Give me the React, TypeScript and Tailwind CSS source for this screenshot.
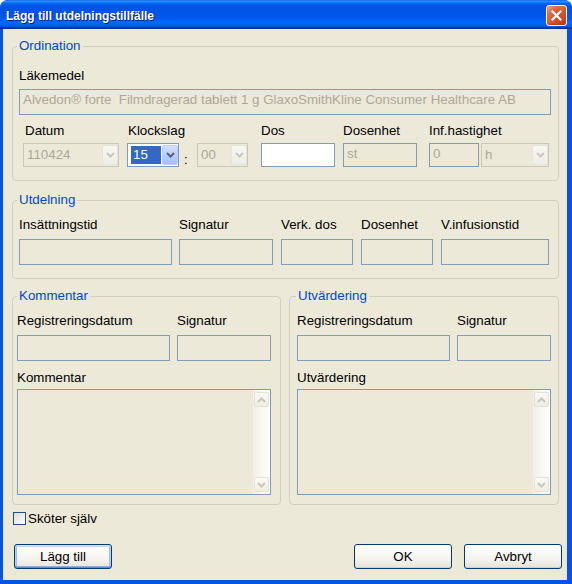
import React from "react";

function Chevron({ color, up }: { color: string; up?: boolean }) {
  return (
    <svg width="9" height="6" viewBox="0 0 9 6">
      <polyline
        points={up ? "1,5 4.5,1.5 8,5" : "1,1 4.5,4.5 8,1"}
        fill="none"
        stroke={color}
        strokeWidth="2"
      />
    </svg>
  );
}

function Label({ children, className = "" }: { children: React.ReactNode; className?: string }) {
  return <div className={`h-[16px] leading-[16px] whitespace-nowrap ${className}`}>{children}</div>;
}

function Box({ className = "", text, white }: { className?: string; text?: string; white?: boolean }) {
  return (
    <div
      className={`h-[26px] border border-[#7F9DB9] pl-[3px] pt-[2px] leading-[16px] text-[#ACA899] whitespace-pre overflow-hidden ${
        white ? "bg-white" : "bg-[#ECE9D8]"
      } ${className}`}
    >
      {text}
    </div>
  );
}

function DisabledCombo({ className = "", text }: { className?: string; text: string }) {
  return (
    <div className={`flex h-[24px] border border-[#C9C7BA] bg-[#ECE9D8] py-[1px] pl-[1px] ${className}`}>
      <div className="flex-1 pl-[2px] pt-[2px] leading-[16px] text-[#ACA899]">{text}</div>
      <div className="w-[16px] h-full rounded-[2px] border border-[#E6E4D8] bg-[linear-gradient(180deg,#F8F7F2,#EEEDE6)] flex items-center justify-center">
        <Chevron color="#C9C7BA" />
      </div>
    </div>
  );
}

function ActiveCombo() {
  return (
    <div className="flex h-[24px] w-[52px] border border-[#7F9DB9] bg-white py-[1px] pl-[1px]">
      <div className="w-[34px]">
        <div className="ml-[2px] mt-[1px] h-[18px] w-[30px] bg-[#316AC5] text-white pl-[2px] leading-[17px]">15</div>
      </div>
      <div className="w-[16px] h-full rounded-[2px] border border-[#B9CDF7] bg-[linear-gradient(180deg,#D3E0FD,#B6CBF8_60%,#A8C0F5)] flex items-center justify-center">
        <Chevron color="#4D6185" />
      </div>
    </div>
  );
}

function Group({
  title,
  titleLeft,
  className = "",
  children,
}: {
  title: string;
  titleLeft: string;
  className?: string;
  children: React.ReactNode;
}) {
  return (
    <div className={`relative border border-[#D0D0BF] rounded-[4px] ${className}`}>
      <span className={`absolute top-[-9px] ${titleLeft} px-[2px] bg-[#ECE9D8] text-[#0046D5] leading-[16px]`}>
        {title}
      </span>
      {children}
    </div>
  );
}

function ScrollBtn({ up }: { up?: boolean }) {
  return (
    <div className="w-[15px] h-[15px] rounded-[2px] border border-[#E4E2D8] bg-[linear-gradient(180deg,#FAF9F5,#EEEDE6)] flex items-center justify-center">
      <Chevron color="#C9C7BA" up={up} />
    </div>
  );
}

function TextArea() {
  return (
    <div className="mt-[3px] w-[254px] h-[106px] border border-[#7F9DB9] bg-[#ECE9D8] flex justify-end">
      <div className="w-[17px] h-full flex flex-col justify-between py-[2px] px-[1px] bg-[linear-gradient(90deg,#F1EFE7,#FEFEFB)]">
        <ScrollBtn up />
        <ScrollBtn />
      </div>
    </div>
  );
}

function XPButton({ children, className = "", def }: { children: React.ReactNode; className?: string; def?: boolean }) {
  return (
    <div
      className={`shrink-0 w-[98px] h-[25px] rounded-[3px] border border-[#003C74] bg-[linear-gradient(180deg,#FFFFFF,#F4F3EE_60%,#E6E3D6)] flex items-center justify-center leading-[16px] ${
        def
          ? "shadow-[inset_0_1px_0_#CEE7FF,inset_0_-1px_0_#6982EE,inset_1px_0_0_#B8D0F5,inset_-1px_0_0_#B8D0F5,inset_0_2px_0_#BCD4F6,inset_0_-2px_0_#89ADE4,inset_2px_0_0_#9DBCF0,inset_-2px_0_0_#9DBCF0]"
          : "shadow-[inset_0_-1px_0_#D6D0C5]"
      } ${className}`}
    >
      {children}
    </div>
  );
}

function RegRow() {
  return (
    <>
      <div className="flex">
        <div className="w-[153px] flex flex-col">
          <Label>Registreringsdatum</Label>
          <Box className="mt-[6px] w-[153px]" />
        </div>
        <div className="ml-[7px] w-[94px] flex flex-col">
          <Label>Signatur</Label>
          <Box className="mt-[6px] w-[94px]" />
        </div>
      </div>
    </>
  );
}

export default function App() {
  return (
    <div className="w-[572px] h-[584px] flex flex-col bg-[#0553E4] rounded-t-[8px] overflow-hidden font-['Liberation_Sans',Arial,sans-serif] text-[13.33px] text-black">
      {/* Title bar */}
      <div className="h-[29px] shrink-0 flex items-start justify-between bg-[linear-gradient(180deg,#0058ee_0%,#3593ff_4%,#288eff_6%,#127dff_8%,#036ffc_10%,#0262ee_14%,#0057e5_20%,#0054e3_24%,#0055eb_56%,#005bf5_66%,#026afe_76%,#0062ef_86%,#0052d6_92%,#0040ab_94%,#003092_100%)]">
        <div className="pl-[6px] pt-[8px] text-[12px] font-bold leading-[16px] text-white [text-shadow:1px_1px_0_#0A1883]">
          Lägg till utdelningstillfälle
        </div>
        <div className="mt-[5px] mr-[5px] w-[21px] h-[21px] rounded-[3px] border border-white bg-[radial-gradient(circle_at_85%_85%,#C23F1C_0%,#DA5B32_55%,#E27453_75%,#F4B29C_100%)] shadow-[inset_0_-1px_2px_#B23A12] flex items-center justify-center">
          <svg width="11" height="11" viewBox="0 0 11 11">
            <path d="M1.5 1.5 L9.5 9.5 M9.5 1.5 L1.5 9.5" stroke="white" strokeWidth="2.2" strokeLinecap="square" />
          </svg>
        </div>
      </div>

      {/* Body */}
      <div className="ml-[3px] mr-[5px] mb-[4px] h-[551px] bg-[#ECE9D8] pl-[9px] pr-[8px] pt-[17px] flex flex-col">
        {/* Ordination */}
        <Group title="Ordination" titleLeft="left-[4px]" className="h-[135px] pt-[21px] pl-[6px] flex flex-col">
          <Label>Läkemedel</Label>
          <Box
            className="mt-[5px] w-[532px]"
            text="Alvedon® forte  Filmdragerad tablett 1 g GlaxoSmithKline Consumer Healthcare AB"
          />
          <div className="mt-[8px] flex">
            <div className="ml-[4px] flex flex-col">
              <Label className="pl-[2px]">Datum</Label>
              <DisabledCombo className="mt-[4px] w-[96px]" text="110424" />
            </div>
            <div className="ml-[8px] flex flex-col">
              <Label className="pl-[1px]">Klockslag</Label>
              <div className="mt-[4px] flex">
                <ActiveCombo />
                <div className="w-[18px] h-[24px] pl-[5px] pt-[10px] leading-[13px]">:</div>
                <DisabledCombo className="w-[51px]" text="00" />
              </div>
            </div>
            <div className="ml-[13px] flex flex-col">
              <Label>Dos</Label>
              <div className="mt-[4px] w-[74px] h-[24px] border border-[#7F9DB9] bg-white" />
            </div>
            <div className="ml-[8px] flex flex-col">
              <Label>Dosenhet</Label>
              <div className="mt-[4px] w-[74px] h-[24px] border border-[#7F9DB9] bg-[#ECE9D8] pl-[3px] pt-[2px] leading-[16px] text-[#ACA899]">
                st
              </div>
            </div>
            <div className="ml-[12px] flex flex-col">
              <Label>Inf.hastighet</Label>
              <div className="mt-[4px] flex">
                <div className="w-[50px] h-[24px] border border-[#7F9DB9] bg-[#ECE9D8] pl-[3px] pt-[2px] leading-[16px] text-[#ACA899]">
                  0
                </div>
                <DisabledCombo className="ml-[2px] w-[68px]" text="h" />
              </div>
            </div>
          </div>
        </Group>

        {/* Utdelning */}
        <Group title="Utdelning" titleLeft="left-[4px]" className="mt-[19px] h-[79px] pt-[16px] pl-[6px] flex">
          <div className="w-[153px] flex flex-col">
            <Label>Insättningstid</Label>
            <Box className="mt-[6px] w-[153px]" />
          </div>
          <div className="ml-[7px] w-[94px] flex flex-col">
            <Label>Signatur</Label>
            <Box className="mt-[6px] w-[94px]" />
          </div>
          <div className="ml-[8px] w-[72px] flex flex-col">
            <Label>Verk. dos</Label>
            <Box className="mt-[6px] w-[72px]" />
          </div>
          <div className="ml-[8px] w-[72px] flex flex-col">
            <Label>Dosenhet</Label>
            <Box className="mt-[6px] w-[72px]" />
          </div>
          <div className="ml-[8px] w-[108px] flex flex-col">
            <Label>V.infusionstid</Label>
            <Box className="mt-[6px] w-[108px]" />
          </div>
        </Group>

        {/* Kommentar / Utvärdering */}
        <div className="mt-[17px] h-[209px] flex">
          <Group title="Kommentar" titleLeft="left-[4px]" className="w-[269px] h-full pt-[16px] pl-[4px] flex flex-col">
            <RegRow />
            <Label className="mt-[9px]">Kommentar</Label>
            <TextArea />
          </Group>
          <Group title="Utvärdering" titleLeft="left-[6px]" className="ml-[8px] w-[270px] h-full pt-[16px] pl-[7px] flex flex-col">
            <RegRow />
            <Label className="mt-[9px]">Utvärdering</Label>
            <TextArea />
          </Group>
        </div>

        {/* Checkbox */}
        <div className="mt-[7px] ml-[1px] flex items-start">
          <div className="w-[13px] h-[13px] border border-[#1C5180] bg-[linear-gradient(135deg,#DCDCD7,#FFFFFF)]" />
          <div className="ml-[2px] leading-[13px]">Sköter själv</div>
        </div>

        {/* Buttons */}
        <div className="mt-[19px] flex">
          <XPButton className="ml-[2px]" def>
            Lägg till
          </XPButton>
          <XPButton className="ml-[242px]">OK</XPButton>
          <XPButton className="ml-[12px]">Avbryt</XPButton>
        </div>
      </div>
    </div>
  );
}
